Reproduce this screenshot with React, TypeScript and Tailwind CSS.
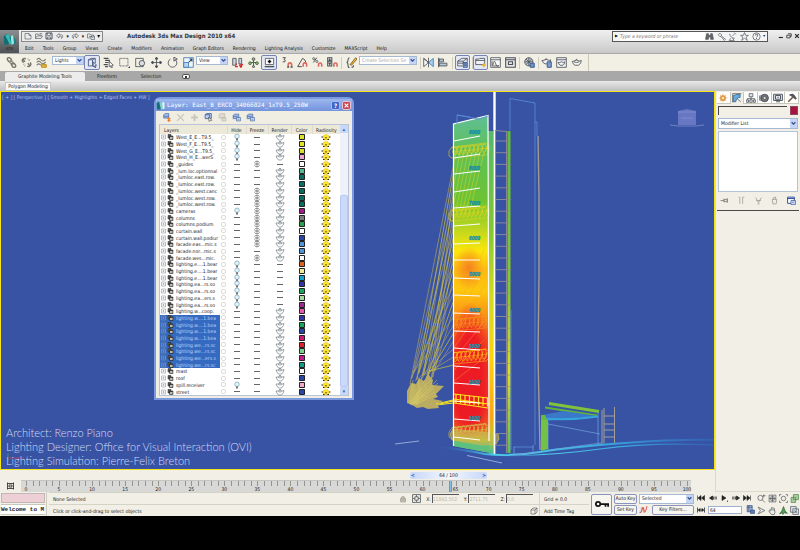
import React from "react";

type IconProps = { children: React.ReactNode; className?: string };

function Icon({ children, className = "size-3" }: IconProps) {
  return (
    <svg viewBox="0 0 16 16" className={`block shrink-0 ${className}`} fill="none" stroke="#4b5058" strokeWidth="1.2" aria-hidden="true">
      {children}
    </svg>
  );
}

const g = {
  newFile: <path d="M2 3h8l4 4v7H2zM10 3v4h4" />,
  open: <path d="M1 13V4h5l1 2h5v2M1 13l3-5h11l-3 5zM9 3h4l1 2" />,
  save: (
    <>
      <path d="M2 2h12v12H2z" strokeWidth="2" />
      <path d="M5 2v5h6V2M5 14v-4h6v4" />
    </>
  ),
  undo: <path d="M6 3 1 8l5 4V9c4-2 6 0 5 4 5-5 2-9-5-7z" />,
  redo: <path d="M10 3l5 5-5 4V9c-4-2-6 0-5 4-5-5-2-9 5-7z" />,
  project: <path d="M1 4h5l1 2h6v3M1 4v8h6M4 9h6M8 8h7v7H8zM10 11h3" />,
  link: (
    <>
      <ellipse cx="5" cy="4" rx="3.5" ry="2.4" transform="rotate(45 5 4)" stroke="#77746c" strokeWidth="2" />
      <ellipse cx="8" cy="8" rx="3.5" ry="2" transform="rotate(45 8 8)" stroke="#9a968b" strokeWidth="1.6" />
      <ellipse cx="11" cy="12" rx="3.5" ry="2.4" transform="rotate(45 11 12)" stroke="#77746c" strokeWidth="2" />
    </>
  ),
  unlink: (
    <>
      <path d="M7 3a3 3 0 1 0-3 5M3 4l3 3M9 13a3 3 0 1 0 4-5M10 9l3 4" stroke="#77746c" strokeWidth="2" />
      <path d="M10 2l1 3M13 3l-1 3M3 11l2-1M5 14l1-3" stroke="#a7a294" />
    </>
  ),
  bind: (
    <>
      <path d="M1 4q3-4 6 0t7-1M1 8q3-4 6 0t7-1M1 12q3-4 6 0" stroke="#77746c" strokeWidth="1.6" />
      <path d="M8 11h7v4H8z" fill="#e0b13a" stroke="#b98512" />
    </>
  ),
  select: <path d="M2 4l4-2h6v7M2 4h6v9H2zM8 4l4-2M9 7l5 5-2 .4 1 2.6-1.500.5-1-2.600-1.500 1.500z" stroke="#3d4f7a" />,
  byName: (
    <>
      <path d="M1 2h7M3 5h7M3 8h5M1 11h6M3 14h4" strokeWidth="1.700" />
      <path d="M9 6l6 6-2.500.3 1 3-1.500.5-1-3L9 14z" fill="#fff" />
    </>
  ),
  rect: (
    <>
      <path d="M1 2h12v11H1z" strokeDasharray="1.500 .7" />
      <path d="M13 16h3v-3z" fill="#333" stroke="none" />
    </>
  ),
  windowSel: (
    <>
      <path d="M1 2h11v12H1z" />
      <circle cx="10" cy="9" r="4" fill="#d8dde2" />
    </>
  ),
  move: <path d="M8 2v12M2 8h12M8 0L6 3h4zM8 16l-2-3h4zM0 8l3-2v4zM16 8l-3-2v4z" fill="#3e434a" />,
  rotate: <path d="M11 3A6.300 6.300 0 1 1 5 3M10 0l5 3-5 3z" />,
  scale: (
    <>
      <path d="M1 1h14v14H1z" fill="#eef4fb" stroke="#3d78b8" />
      <path d="M1 8h7v7H1z" fill="#b8d4ef" stroke="#3d78b8" />
      <path d="M8 8l5-5M9.500 3H13v3.500" stroke="#24496f" strokeWidth="1.500" />
    </>
  ),
  pivot: (
    <>
      <path d="M1 2h5v10H1zM10 2h4v8h-4z" fill="#c8d4e4" />
      <path d="M6 12v-3M4.500 14h4M13 15l2-4-4 1z" stroke="#cf2525" strokeWidth="1.800" />
    </>
  ),
  manip: (
    <>
      <path d="M8 3v10M3 8h10" stroke="#4b6a4b" strokeWidth="1.600" />
      <circle cx="8" cy="3" r="2" fill="#8fc46d" />
      <circle cx="3" cy="9" r="2" fill="#8fc46d" />
      <circle cx="13" cy="9" r="2" fill="#8fc46d" />
      <circle cx="8" cy="14" r="1.500" fill="#8fc46d" />
    </>
  ),
  keyboard: (
    <>
      <path d="M2 2h12v9H2z" fill="#fff" />
      <path d="M8 4v5M5.500 6.500h5" stroke="#111" strokeWidth="2.200" />
      <path d="M1 14h14" strokeWidth="2" />
    </>
  ),
  snap3: (
    <>
      <path d="M1 1h4l-2 2.500q3 .5 1 3.500H1" stroke="#333" />
      <path d="M9 14v-3a2.500 2.500 0 0 1 5 0v3" stroke="#db6a5e" strokeWidth="2.300" />
      <path d="M7.500 14.500h3M12.500 14.500h3" stroke="#555" strokeWidth="2" />
    </>
  ),
  snapAngle: (
    <>
      <path d="M1 14L8 2q4 1 5 6M1 14h6" stroke="#333" />
      <path d="M9 14v-3a2.500 2.500 0 0 1 5 0v3" stroke="#db6a5e" strokeWidth="2.300" />
    </>
  ),
  snapPercent: (
    <>
      <path d="M2 8l5-7" stroke="#333" />
      <circle cx="2.500" cy="2.500" r="1.500" />
      <circle cx="7" cy="6.500" r="1.500" />
      <path d="M9.500 14v-3a2.300 2.300 0 0 1 4.600 0v3" stroke="#db6a5e" strokeWidth="2.300" />
    </>
  ),
  snapSpin: (
    <>
      <path d="M1 1h6v12H1zM1 7h6M3 5l1-2 1 2zM3 9l1 2 1-2z" strokeWidth="1.500" />
      <path d="M10 14v-3a2.300 2.300 0 0 1 4.600 0v3" stroke="#db6a5e" strokeWidth="2.300" />
    </>
  ),
  namedSel: (
    <>
      <path d="M5 1Q3 1 3 4t-2 4q2 0 2 4t2 3M8 15q3 0 3-3" strokeWidth="1.500" />
      <path d="M6 11L14 1l2 2-8 9z" fill="#f0b436" stroke="#7d5a12" />
    </>
  ),
  mirror: (
    <>
      <path d="M1 2v12l6-5V7z M1 2l6 5" fill="#f7f7f7" />
      <path d="M15 2v12L9 9V7z" fill="#a9cff2" stroke="#3d78b8" />
      <path d="M8 1v14" />
    </>
  ),
  align: (
    <>
      <path d="M1 1v14" strokeWidth="1.600" />
      <path d="M2 3h6v4H2zM2 9h11v4H2z" fill="#bcc6d2" />
    </>
  ),
  layers: (
    <>
      <path d="M1 6l6-4h8l-6 4zM1 6v3h8M1 9v4h7M9 6v3M15 2v5" fill="#e9eef6" />
      <path d="M9 8h6v7H9zM10 10h4M10 12h4" fill="#90a8cf" stroke="#31508a" />
    </>
  ),
  ribbon: (
    <>
      <path d="M1 3h5l1-1h7v9H1zM1 5h13" fill="#eef1f6" />
      <path d="M13 9v6M10 12h6" stroke="#e9b93a" strokeWidth="2.400" />
    </>
  ),
  curve: (
    <>
      <path d="M1 1h14v14H1zM1 4h14M3 6v7h10" fill="#fafafa" />
      <path d="M4 12Q6 2 8 9t5 3" />
    </>
  ),
  schematic: <path d="M1 1h14v14H1zM1 4h14M5 7h6v4H5z" strokeWidth="1.500" fill="#e4e6e8" />,
  material: (
    <>
      <circle cx="7" cy="7" r="6" fill="#c3cbd6" />
      <path d="M1 7h12M7 1v12M3 3l8 8M11 3L3 11" />
      <path d="M9 9h6v6H9z" fill="#6f92c8" stroke="#31508a" />
    </>
  ),
  renderSetup: (
    <>
      <path d="M3 5q5-3 9 0l2-1q0 4-3 6H6Q3 9 2 6 0 5 3 5M6 3h3" fill="#eee" />
      <path d="M9 7h6v8H9z" fill="#7d9bcb" stroke="#31508a" />
    </>
  ),
  renderFrame: <path d="M1 1h14v14H1zM1 4h14M5 8q3-2 6 0l2-1q-1 4-3 5H6Q4 10 3 8z" fill="#f1f3f6" />,
  teapot: <path d="M4 6q4-3 8 0l3-1q0 4-4 7H6Q3 11 2.500 8 0 6 4 6M7 3.500h2M4 7q4 2 8 0" fill="#f5f5f0" />,
  binoculars: <path d="M3 3h3v3h4V3h3l2 10h-5V9H6v4H1z" fill="#666" />,
  wrench: <path d="M2 5l3-3 3 3v2l7 6-2 2-6-7H5z" />,
  dish: <path d="M3 3q1 8 9 8M5 11l-3 4h9l-3-4M8 7l4-4M11 1l3 3" />,
  star: <path d="M8 1l2 5h5l-4 3 2 6-5-4-5 4 2-6-4-3h5z" />,
  help: (
    <>
      <circle cx="8" cy="8" r="6.500" />
      <path d="M6 6q0-2 2-2t2 2-2 3M8 11v1.500" strokeWidth="1.700" />
    </>
  ),
  minimize: <path d="M2 12h11" strokeWidth="3" stroke="#222" />,
  restore: <path d="M5 2h9v7h-3M2 6h9v7H2z" strokeWidth="2" stroke="#222" />,
  close: <path d="M3 3l10 10M13 3L3 13" strokeWidth="3" stroke="#222" />,
  sun: (
    <>
      <path d="M8 1v14M1 8h14M3 3l10 10M13 3L3 13" stroke="#f3bf7c" strokeWidth="1.500" />
      <circle cx="8" cy="8" r="3.500" fill="#fbe3b8" stroke="#e08a2d" strokeWidth="2.200" />
    </>
  ),
  modify: (
    <>
      <path d="M2 14V4q6-2 11-2v5q-6 0-7 7z" fill="#6aa9dc" stroke="#28659b" />
      <path d="M1 1h14M1 1v14M8 9l6 5" stroke="#555" />
    </>
  ),
  hierarchy: <path d="M5 1h6v5H5zM8 6v3M2 9h12M2 9v2M8 9v2M14 9v2M1 11h3v4H1zM6 11h4v4H6zM12 11h3v4h-3z" fill="#e8e8e8" />,
  motion: (
    <>
      <circle cx="9" cy="8" r="6" fill="#777" strokeWidth="1.500" />
      <circle cx="9" cy="8" r="2.500" fill="#ddd" />
      <path d="M1 4v8M3 3v10" />
    </>
  ),
  display: <path d="M1 2h14v10H1zM4 4h8v6H4zM5 14h6M8 6v2" fill="#e6ecf4" strokeWidth="1.500" />,
  hammer: (
    <>
      <path d="M2 14L10 6" stroke="#7a5a3a" strokeWidth="2.500" />
      <path d="M4 3q5-3 8 1l3 5-2 1-4-4z" fill="#555" />
    </>
  ),
  pin: <path d="M1 8h6M7 5v6M7 6h6v4H7zM13 4v8" strokeWidth="1.700" stroke="#8b8b84" />,
  showEnd: <path d="M5 2v12M10 2v12M3 2h2M10 2h3" strokeWidth="1.700" stroke="#b0ada0" />,
  unique: <path d="M3 3l5 9 5-9M6 14h4M4 8h8" strokeWidth="1.500" stroke="#a19e92" />,
  trash: <path d="M4 6h8l-1 8H5zM6 6V3l4-1v4" strokeWidth="1.500" stroke="#a19e92" />,
  configure: (
    <>
      <path d="M1 2h12v11H1zM1 4.500h12" fill="#fff" stroke="#2b4c9b" strokeWidth="1.700" />
      <path d="M7 8h8v7H7zM9 11h4" fill="#dce6f8" stroke="#2b4c9b" />
    </>
  ),
  lock: <path d="M3 7h10v7H3zM5 7V4q3-3 6 0v3M3 10h10" fill="#c9c6ba" stroke="#999688" />,
  axis: <path d="M1 1h14v14H1zM8 2v3M8 11v3M2 8h3M11 8h3M5 5h6v6H5z" strokeWidth="1.400" />,
  cube: <path d="M2 6l4-4h8v8l-4 4H2zM2 6h8v8M10 6l4-4" />,
  key: (
    <>
      <circle cx="3.500" cy="8" r="2.500" strokeWidth="2" stroke="#111" />
      <path d="M6 8h9v3M12 8v3" strokeWidth="2" stroke="#111" />
    </>
  ),
  wave: (
    <>
      <path d="M1 13h3V5h4v8h3" stroke="#999" />
      <path d="M1 14Q5 14 6 7t3 2 5-7" stroke="#d93a3a" strokeWidth="1.500" />
    </>
  ),
  toStart: <path d="M1 3v10M8 3L2 8l6 5zM15 3L9 8l6 5z" fill="#222" stroke="#222" />,
  prev: <path d="M7 4L1 8l6 4zM9 5v6M12 5v6M14.500 5v6" fill="#222" stroke="#222" strokeWidth="1.500" />,
  play: <path d="M4 3v10l8-5zM14 14h2v2" fill="#222" stroke="#222" />,
  next: <path d="M9 4l6 4-6 4zM1.500 5v6M4 5v6M7 5v6" fill="#222" stroke="#222" strokeWidth="1.500" />,
  toEnd: <path d="M15 3v10M8 3l6 5-6 5zM1 3l6 5-6 5z" fill="#222" stroke="#222" />,
  keyMode: <path d="M1 3v10M15 3v10M2 8h12M6 5L3 8l3 3zM10 5l3 3-3 3z" fill="#222" stroke="#222" strokeWidth="1.500" />,
  timeCfg: (
    <>
      <path d="M2 1h9v11H2zM2 4h9M5 1v11" fill="#9db3d6" stroke="#38507e" />
      <path d="M8 9h7v6H8z" fill="#5d7db5" stroke="#38507e" />
    </>
  ),
  zoom: (
    <>
      <circle cx="6" cy="7" r="4.500" />
      <path d="M9 10l5 5M12 1v5M10 3h5" />
    </>
  ),
  zoomAll: <path d="M2 2h12v12H2zM8 2v12M2 8h12M5 5h6v6H5z" />,
  extents: (
    <>
      <path d="M1 4V1h3M12 1h3v3M15 12v3h-3M4 15H1v-3" />
      <circle cx="8" cy="8" r="4" />
    </>
  ),
  extentsAll: <path d="M6 1h9v9H6zM2 6h8v9H2z" fill="#a9cfa0" stroke="#4f7d48" />,
  fov: <path d="M2 2l12 6-12 6 4-6z" fill="#eee" />,
  hand: <path d="M4 9V5M6.500 8V2M9 8V2M11.500 9V4M4 9q-3-2-2 1l4 5h5q2-3 1-7" />,
  walk: <path d="M8 1l3 8 4 4-6-1-2 3-1-3-5 2 4-5z" fill="#4ba24f" stroke="#2f5c33" />,
  maxView: <path d="M1 1h10v10H1zM5 5h10v10H5zM8 8l4 4" fill="#dfe6f0" />,
  layerNew: (
    <>
      <path d="M3 3l3-2h6v8H3zM3 6h9" fill="#a6bfe8" stroke="#41649f" />
      <path d="M9 9l6 5M15 9l-5 5M12 8v8" stroke="#ef7c22" strokeWidth="1.800" />
    </>
  ),
  delX: <path d="M2 2l12 12M14 2L2 14" stroke="#c9c6bb" strokeWidth="2.500" />,
  plus: <path d="M8 2v12M2 8h12" stroke="#c9c6bb" strokeWidth="3.500" />,
  layerSel: (
    <>
      <path d="M2 3l3-2h8v9H2zM2 3h8v7" fill="#bcd0f0" stroke="#41649f" strokeWidth="1.500" />
      <path d="M8 7l6 6-3 .5L9 15z" fill="#fff" />
    </>
  ),
  layerDim: <path d="M2 3l3-2h7v8H2zM7 8h7v6H7z" fill="#dedbd0" stroke="#bbb8aa" />,
  layerHide: (
    <>
      <path d="M2 4l3-2h7v8H2zM2 6h8" fill="#a6bfe8" stroke="#41649f" />
      <path d="M8 8h7v6H8zM10 11h3" fill="#d6e1f4" stroke="#41649f" />
    </>
  ),
  bars: <path d="M2 1v14M14 1v14M2 3h12M2 13h12M5 6h6v4H5z" strokeWidth="1.600" stroke="#222" />,
};

type ToolProps = { icon: React.ReactNode; label: string; active?: boolean; className?: string };
function Tool({ icon, label, active, className = "h-[15px] w-[15px]" }: ToolProps) {
  return (
    <button
      aria-label={label}
      className={`flex shrink-0 items-center justify-center ${className} ${active ? "rounded-xs border border-[#7583b5] bg-[#e3e8f4]" : ""}`}
    >
      <Icon className="size-[11px]">{icon}</Icon>
    </button>
  );
}

type DropProps = { label: string; value: string; className: string; muted?: boolean };
function Drop({ label, value, className, muted }: DropProps) {
  return (
    <div className={`relative shrink-0 ${className}`}>
      <select
        aria-label={label}
        className={`block h-full w-full appearance-none border border-[#a5b8d4] bg-white pl-[2px] text-[5px] leading-[7px] ${muted ? "text-[#a8a8a8]" : "text-[#222]"}`}
      >
        <option>{value}</option>
      </select>
      <span className="pointer-events-none absolute inset-y-px right-px flex w-[7px] items-center justify-center bg-[#c6d5f5]">
        <svg viewBox="0 0 8 8" className="size-[5px]" fill="none" stroke="#31528f" strokeWidth="2" aria-hidden="true">
          <path d="M1 2l3 3 3-3" />
        </svg>
      </span>
    </div>
  );
}

function Sep() {
  return <span className="h-3 w-px shrink-0 bg-[#d0cdc0]" />;
}

const menus = ["Edit", "Tools", "Group", "Views", "Create", "Modifiers", "Animation", "Graph Editors", "Rendering", "Lighting Analysis", "Customize", "MAXScript", "Help"];

function Header() {
  return (
    <header className="flex bg-linear-to-b from-[#f0f0f0] to-[#c9c9c9]">
      <button aria-label="Application menu" className="flex h-[23px] w-[19px] shrink-0 flex-col items-center justify-center bg-linear-to-b from-[#8b8f91] to-[#4e5254]">
        <svg viewBox="0 0 20 18" className="h-[15px] w-4" aria-hidden="true">
          <path d="M2 5l4-3 4 5-2 8-5 1z" fill="#0e6e73" />
          <path d="M4 4l4-2 5 9-3 5z" fill="#39b9b4" />
          <path d="M9 6l5-3 4 10-5 3z" fill="#128088" />
          <path d="M11 5l3-2 1 11-3 2z" fill="#a9e5dd" />
        </svg>
        <span className="text-[4px] leading-[4px] text-[#222]">ADS</span>
      </button>
      <div className="flex min-w-0 flex-1 flex-col">
        <div className="flex h-3 items-center pl-[2px]">
          <div className="flex h-[11px] w-[82px] shrink-0 items-center justify-between border border-[#888] bg-[#ececec] px-[2px]">
            {[g.newFile, g.open, g.save, g.undo].map((ic, i) => (
              <button key={i} aria-label={["New", "Open", "Save", "Undo"][i]}>
                <Icon className="size-2">{ic}</Icon>
              </button>
            ))}
            <span className="text-[5px] leading-[6px]">▾</span>
            <button aria-label="Redo"><Icon className="size-2">{g.redo}</Icon></button>
            <span className="text-[5px] leading-[6px]">▾</span>
            <button aria-label="Project folder"><Icon className="size-2">{g.project}</Icon></button>
            <span className="text-[6px] leading-[6px]">▾</span>
          </div>
          <h1 className="ml-6 flex-1 text-[6px] leading-[8px] font-bold whitespace-nowrap text-[#333]">Autodesk 3ds Max Design 2010 x64</h1>
          <div className="flex h-[11px] w-[156px] shrink-0 items-center border border-[#555] bg-[#f5f5f5] pr-[2px]">
            <span className="w-[7px] text-center text-[4px] leading-[6px]">▶</span>
            <input aria-label="Search" placeholder="Type a keyword or phrase" className="h-[9px] w-[85px] bg-white text-[5px] leading-[7px] italic placeholder:text-[#777]" />
            <div className="flex flex-1 items-center justify-between">
              {[g.binoculars, g.wrench, g.dish, g.star, g.help].map((ic, i) => (
                <button key={i} aria-label={["Find", "Subscription", "Communication", "Favorites", "Help"][i]}>
                  <Icon className="size-[9px]">{ic}</Icon>
                </button>
              ))}
              <span className="text-[4px] leading-[6px]">▾</span>
            </div>
          </div>
          <div className="flex w-8 shrink-0 items-center justify-end gap-[2px]">
            {[g.minimize, g.restore, g.close].map((ic, i) => (
              <button key={i} aria-label={["Minimize", "Restore", "Close"][i]}>
                <Icon className="size-[6px]">{ic}</Icon>
              </button>
            ))}
          </div>
        </div>
        <nav className="flex h-[11px] items-center gap-[9px] pl-[6px] text-[5px] leading-[8px] text-[#111]">
          {menus.map((m) => (
            <button key={m} className="whitespace-nowrap">{m}</button>
          ))}
        </nav>
      </div>
    </header>
  );
}

function Toolbar() {
  const mid = "h-[15px] w-4";
  return (
    <div className="flex h-[18px] items-center overflow-hidden border-t border-[#aaa] bg-[#f2f0e4] pl-1">
      <Tool icon={g.link} label="Link" />
      <Tool icon={g.unlink} label="Unlink" />
      <Tool icon={g.bind} label="Bind" />
      <Drop label="Selection filter" value="Lights" className="mt-[2px] ml-[3px] h-[9px] w-8 self-start" />
      <Tool icon={g.select} label="Select" active className={mid} />
      <Tool icon={g.byName} label="Select by name" className={mid} />
      <Tool icon={g.rect} label="Rectangular region" className={mid} />
      <Tool icon={g.windowSel} label="Window crossing" className={mid} />
      <Tool icon={g.move} label="Move" className={mid} />
      <Tool icon={g.rotate} label="Rotate" className={mid} />
      <Tool icon={g.scale} label="Scale" className={mid} />
      <Drop label="Coordinate system" value="View" className="mt-[2px] mr-px h-[9px] w-8 self-start" />
      <Tool icon={g.pivot} label="Pivot center" className={mid} />
      <Tool icon={g.manip} label="Manipulate" className={mid} />
      <Tool icon={g.keyboard} label="Keyboard override" active className={mid} />
      <div className="flex items-center pl-[3px]">
        <Tool icon={g.snap3} label="Snaps" />
        <Tool icon={g.snapAngle} label="Angle snap" />
        <Tool icon={g.snapPercent} label="Percent snap" />
        <Tool icon={g.snapSpin} label="Spinner snap" />
      </div>
      <div className="flex items-center gap-[2px] pl-px">
        <Sep />
        <Tool icon={g.namedSel} label="Named selections" />
      </div>
      <Drop label="Selection set" value="Create Selection Se" muted className="mt-[2px] h-[9px] w-[58px] self-start" />
      <div className="flex items-center pl-[3px]">
        <Sep />
        <Tool icon={g.mirror} label="Mirror" />
        <Tool icon={g.align} label="Align" />
      </div>
      <div className="flex items-center gap-[2px] pl-px">
        <Sep />
        <Tool icon={g.layers} label="Layers" active />
        <Sep />
      </div>
      <Tool icon={g.ribbon} label="Ribbon" active />
      <Tool icon={g.curve} label="Curve editor" />
      <Tool icon={g.schematic} label="Schematic view" />
      <div className="flex items-center gap-px pl-px">
        <Sep />
        <Tool icon={g.material} label="Materials" className={mid} />
        <Sep />
      </div>
      <Tool icon={g.renderSetup} label="Render setup" />
      <Tool icon={g.renderFrame} label="Rendered frame" />
      <Tool icon={g.teapot} label="Render" />
      <span className="ml-1 h-full w-px bg-[#c9c6ba]" />
    </div>
  );
}

function Ribbon() {
  return (
    <>
      <div className="flex h-[10px] items-end bg-[#a8a8a8] pl-[5px] text-[5px] leading-[9px] text-[#222]">
        <button className="h-[9px] w-20 rounded-t-xs bg-[#ececec] text-center whitespace-nowrap">Graphite Modeling Tools</button>
        <button className="w-11 text-center">Freeform</button>
        <button className="w-11 text-center">Selection</button>
        <button aria-label="Ribbon options" className="mb-[2px] ml-[9px] flex h-[5px] w-2 items-center justify-center rounded-xs border border-[#555] bg-white">
          <span className="size-[2px] bg-[#333]" />
        </button>
      </div>
      <div className="flex h-[10px] items-end bg-linear-to-b from-[#e9e9e9] to-[#bfbfbf] pl-[5px]">
        <button className="h-[9px] w-[46px] border border-[#c8c8c8] bg-[#f8f8f8] text-[5px] leading-[7px] whitespace-nowrap text-[#222]">Polygon Modeling</button>
      </div>
    </>
  );
}

/* Floor lines on the facade: left y, right y */
const floors = [
  [141, 136], [158, 154], [174, 171], [192, 188], [208, 206], [226, 224], [244, 243], [260, 260], [278, 279],
  [295, 296], [313, 314], [331, 332], [348, 350], [366, 368], [383, 385], [401, 403], [419, 421], [437, 440],
];
const levels = [134, 170, 205, 240, 276, 312, 348, 384, 420];
const rungs = Array.from({ length: 27 }, (_, i) => 141 + i * 11.7);
const rays = Array.from({ length: 26 }, (_, i) => i);

function Lattice({ y, color, h = 10 }: { y: number; color: string; h?: number }) {
  return (
    <g stroke={color} fill="none" strokeWidth="0.6">
      <path d={`M449 ${y}l3-4 34-4 3 3v6l-3 3-34 3-3-2z`} />
      <path d={`M452 ${y - h / 2 + 2}l34-4M452 ${y + 1}l36-4`} />
      {Array.from({ length: 8 }, (_, i) => (
        <g key={i}>
          <ellipse cx={455 + i * 4.2} cy={y - i * 0.4} rx="2" ry={h / 2 - 1} />
          <path d={`M${454 + i * 4.2} ${y + 4}l4-9`} />
        </g>
      ))}
    </g>
  );
}

function Scene() {
  return (
    <svg viewBox="1 92 713 377" className="absolute inset-0 h-full w-full" role="img" aria-label="Tower lighting simulation">
      <defs>
        <linearGradient id="face" x1="0" y1="0" x2="0" y2="1">
          <stop offset="0" stopColor="#5fbf96" />
          <stop offset="0.100" stopColor="#5fc05a" />
          <stop offset="0.250" stopColor="#6cc334" />
          <stop offset="0.330" stopColor="#b6d520" />
          <stop offset="0.400" stopColor="#fbe60a" />
          <stop offset="0.460" stopColor="#fdb912" />
          <stop offset="0.520" stopColor="#fdc80e" />
          <stop offset="0.600" stopColor="#f98c16" />
          <stop offset="0.670" stopColor="#f25a1e" />
          <stop offset="0.760" stopColor="#ee3c22" />
          <stop offset="0.930" stopColor="#f05a20" />
          <stop offset="0.960" stopColor="#c5c92c" />
          <stop offset="1" stopColor="#3fb6a0" />
        </linearGradient>
        <linearGradient id="side" x1="0" y1="0" x2="0" y2="1">
          <stop offset="0" stopColor="#55b96a" />
          <stop offset="0.300" stopColor="#7fc832" />
          <stop offset="0.500" stopColor="#cfdc1c" />
          <stop offset="0.700" stopColor="#fdd40c" />
          <stop offset="0.880" stopColor="#fba615" />
          <stop offset="0.950" stopColor="#b8cf25" />
          <stop offset="1" stopColor="#3fb6a0" />
        </linearGradient>
        <radialGradient id="hot"><stop offset="0.500" stopColor="#ed1c24" /><stop offset="1" stopColor="#ed1c24" stopOpacity="0" /></radialGradient>
        <radialGradient id="warm"><stop offset="0" stopColor="#f58220" /><stop offset="1" stopColor="#f58220" stopOpacity="0" /></radialGradient>
        <linearGradient id="ground" x1="0" x2="1">
          <stop offset="0" stopColor="#2f7fd0" stopOpacity="0" />
          <stop offset="0.200" stopColor="#4fd0e8" />
          <stop offset="0.600" stopColor="#3aa8e0" />
          <stop offset="1" stopColor="#2f7fd0" stopOpacity="0.300" />
        </linearGradient>
        <linearGradient id="strip" x1="0" y1="0" x2="0" y2="1">
          <stop offset="0" stopColor="#5cbf3a" />
          <stop offset="0.500" stopColor="#86c932" />
          <stop offset="0.750" stopColor="#e2e01a" />
          <stop offset="1" stopColor="#5fc05a" />
        </linearGradient>
        <clipPath id="faceClip"><path d="M453.500 124L488 115.500 490 453 453.500 446z" /></clipPath>
      </defs>

      <g stroke="#b3a55e" strokeWidth="0.600">
        {rays.map((i) => (
          <path key={i} d={`M${410 + ((i * 7) % 26)} ${384 - ((i * 5) % 14)}L453.500 ${165 + i * 8}`} stroke={i % 4 === 1 ? "#e8d928" : i % 3 ? "#ada279" : "#c0af4b"} />
        ))}
      </g>

      <path d="M453.500 124L488 115.500 490 453 453.500 446z" fill="url(#face)" />
      <g clipPath="url(#faceClip)">
        <ellipse cx="469" cy="268" rx="15" ry="22" fill="url(#warm)" />
        <ellipse cx="470" cy="368" rx="23" ry="66" fill="url(#hot)" />
        <ellipse cx="469" cy="402" rx="24" ry="36" fill="url(#hot)" />
        <g strokeWidth="0.500" stroke="#d9d42a">
          {rays.slice(0, 8).map((i) => (
            <path key={i} d={`M${447 + i * 3} ${204 + i * 2}L${456 + i * 4} 152`} />
          ))}
          {rays.slice(0, 7).map((i) => (
            <path key={i} d={`M445 ${334 + i * 9}L484 ${250 + i * 18}`} stroke="#f7a63a" strokeOpacity="0.800" />
          ))}
        </g>
        <path d="M454 440q16 3 36 3v10l-36-6z" fill="#5dc17d" />
      </g>
      <path d="M488 131h6v324l-5-2z" fill="url(#side)" />

      <Lattice y={151} color="#dcd31c" />
      <Lattice y={214} color="#dcd31c" />
      <g clipPath="url(#faceClip)">
        <Lattice y={324} color="#f7941d" h={12} />
        <Lattice y={357} color="#fdb913" h={12} />
      </g>
      <g stroke="#ffe81a" fill="none" strokeWidth="1.200">
        <path d="M440 404l13-3 37 3M454 394l34 4M454 399l34 5M454 403l34 5" />
        {Array.from({ length: 8 }, (_, i) => (
          <path key={i} d={`M${456 + i * 4.500} ${394 + i * 0.500}v9`} />
        ))}
      </g>
      <Lattice y={432} color="#d3bd4a" h={13} />
      <path d="M450 434l3-5 45 5 1 5-3 5-14 1-30-5z" fill="#c8b455" fillOpacity="0.600" stroke="#cdbb4c" strokeWidth="0.700" />

      <g stroke="#fff" strokeWidth="1">
        {floors.map(([a, b]) => (
          <path key={a} d={`M454 ${a}L480 ${b}`} />
        ))}
      </g>
      <g fill="#118fa8" stroke="#118fa8" strokeWidth="0.300" fontSize="5" fontWeight="700" fontStyle="italic" fontFamily="Liberation Sans, sans-serif">
        {levels.map((y, i) => (
          <text key={y} x="469" y={y}>{`${9 - i}000`}</text>
        ))}
      </g>
      <g fill="none" stroke="#fff">
        <path d="M453.500 446V124L488 115.500 489 441" strokeWidth="1.200" />
        <path d="M494.500 92V130" strokeWidth="2.400" />
        <path d="M494.500 130V455" strokeWidth="1.700" />
        <path d="M395 444l24-3M467 455.500l35 7.500" stroke="#a9bfe8" strokeWidth="0.800" />
      </g>

      <g fill="none" stroke="#8a8795" strokeWidth="1">
        {rungs.map((y) => (
          <path key={y} d={`M495 ${y}h12`} />
        ))}
        <path d="M495 130.500l12 1M506.500 131V453" />
      </g>
      <path d="M507.500 131h3v322h-3z" fill="url(#strip)" />
      {rungs.map((y) => (
        <path key={y} d={`M507 ${y}h4`} stroke="#8a8795" strokeWidth="0.600" />
      ))}
      <g fill="none" stroke="#5b8ed8" strokeWidth="0.800">
        <path d="M457 124V115l13 2M510 130V98.500l25 4.500V445M513 447h20M535 122h2v14M511 310v140" />
        <path d="M457 115l22 4 9-3" />
      </g>
      <path d="M538 136l1 60 0 80-1 80 2 94" fill="none" stroke="#9e9c92" strokeWidth="1.400" />

      <path d="M440 447q25 3 45 7 25 3 55-2t85-9 90-3" fill="none" stroke="url(#ground)" strokeWidth="2" />
      <path d="M500 456q50 0 100-7t115-4" fill="none" stroke="url(#ground)" strokeWidth="1.200" />
      <path d="M549 403.500l50 8" stroke="#7fc23c" strokeWidth="3" />
      <path d="M545 407.500l52 8" stroke="#5fb53f" strokeWidth="2" />
      <path d="M542 415l22-4 33 5-50 5z" fill="#3b78c8" />
      <path d="M541 418.500q30 2 57-2" stroke="#35a4dd" strokeWidth="2" fill="none" />
      <path d="M541 420h7v29l-7 2z" fill="#74c148" />
      <path d="M541 415l4 0 2 5h-6z" fill="#69b93f" />
      <path d="M548 422v28M548 424l52 10M550 450l51-7M598 412v32M514 447v8l19-2v-8M513 455l27-3" stroke="#6ea6dd" strokeWidth="0.700" fill="none" />
      <path d="M602 410v34M604 408v35M614.500 407v36M604 416h10M604 424h10M604 430h10M604 437h10" stroke="#a29f97" strokeWidth="1" fill="none" />

      <path d="M678 111l9-2 9 2v14h-18z" fill="#6877c4" />
      <path d="M678 112h18M670 125l8 1h18l8-1M681 118h12" stroke="#8a95d0" strokeWidth="0.700" fill="none" />
      <path d="M8 453v8" stroke="#3f8f68" />
      <path d="M8 458h16" stroke="#b0406a" />

      {/* fixture cluster at the foot of the light fan */}
      <path d="M407 403l0-12 4-8 5 1 3-6 5 3 4-7 5 6-1 5 12 1-8 8 2 3-5 2 10 2-6 3 2 4-11 1-5-2-6 1-5-3z" fill="#b9ac62" />
      <g stroke="#d5c969" strokeWidth="0.500">
        {rays.map((i) => (
          <path key={i} d={`M${409 + (i % 9)} ${403 + (i % 3)}L${413 + i} ${380 + (i % 6) * 3}`} />
        ))}
      </g>
      <path d="M436 404l17-4M437 405l16-2" stroke="#f2e129" />
    </svg>
  );
}

type Row = { name: string; h: boolean; f: boolean; r: boolean; c: string; sel?: boolean };
const row = (name: string, flags: string, c: string, sel = false): Row => ({ name, h: flags.includes("h"), f: flags.includes("f"), r: flags.includes("r"), c, sel });
const rows: Row[] = [
  row("West_E_E...T9.5_", "hr", "#d8e02c"),
  row("West_F_E...T9.5_", "hr", "#e4e32c"),
  row("West_G_E...T9.5_", "hr", "#d8e02c"),
  row("West_H_E...werS", "hr", "#efa3cf"),
  row("_guides", "f", "#ffffff"),
  row("_lum.loc.optionnal", "r", "#58b795"),
  row("_lumloc.east.row.", "r", "#0c6c62"),
  row("_lumloc.east.row.", "r", "#0c6c62"),
  row("_lumloc.west.canc", "fr", "#0c6c62"),
  row("_lumloc.west.row.", "fr", "#0c6c62"),
  row("_lumloc.west.row.", "fr", "#0c6c62"),
  row("cameras", "hfr", "#a31b86"),
  row("columns", "fr", "#7b7b7b"),
  row("columns.podium", "fr", "#2d9f48"),
  row("curtain.wall", "fr", "#ffffff"),
  row("curtain.wall.podiur", "fr", "#2846a3"),
  row("facade.eas...mic.s", "fr", "#4f95d9"),
  row("facade.nor...mic.s", "r", "#4f95d9"),
  row("facade.wes...mic.", "fr", "#ffffff"),
  row("lighting.e....1.bear", "h", "#e0601f"),
  row("lighting.e....1.bear", "h", "#f2ea9a"),
  row("lighting.e....1.bear", "h", "#19a4cf"),
  row("lighting.ea...rs.so", "h", "#3036a5"),
  row("lighting.ea...rs.so", "h", "#1aa55a"),
  row("lighting.ea...ers.s", "h", "#a3d99a"),
  row("lighting.ea...rs.so", "h", "#9a2a8d"),
  row("lighting.w...coop.", "r", "#e05cab"),
  row("lighting.w....1.bea", "r", "#3036a5", true),
  row("lighting.w....1.bea", "r", "#1aa55a", true),
  row("lighting.w....1.bea", "r", "#2846a3", true),
  row("lighting.w....1.bea", "r", "#cc1a6f", true),
  row("lighting.we...rs.sc", "r", "#e0202c", true),
  row("lighting.we...rs.sc", "r", "#7ccf8f", true),
  row("lighting.we...ers.s", "r", "#c21a8c", true),
  row("lighting.we...rs.sc", "r", "#119a86", true),
  row("mast", "r", "#ffffff"),
  row("roof", "r", "#2846a3"),
  row("spill.receiver", "hr", "#f3a8c8"),
  row("street", "r", "#2846a3"),
];

const Dash = () => <span className="mx-auto block h-px w-[6px] bg-[#666]" />;
const Bulb = () => (
  <svg viewBox="0 0 12 12" className="mx-auto block size-[6px] overflow-visible" aria-hidden="true">
    <circle cx="6" cy="4.500" r="4.500" fill="#e3f4fa" stroke="#6f98aa" strokeWidth="1.300" />
    <path d="M4.500 9h3v4h-3z" fill="#444" />
  </svg>
);
const Flake = () => (
  <svg viewBox="0 0 12 12" className="mx-auto block size-[6px] overflow-visible" fill="none" stroke="#777" strokeWidth="1.300" aria-hidden="true">
    <path d="M6-1v14M0 3l12 6M12 3L0 9M2 1h8M2 11h8" />
  </svg>
);
const Pot = () => (
  <svg viewBox="0 0 16 12" className="mx-auto block h-[6px] w-2 overflow-visible" fill="#fff" stroke="#69757a" strokeWidth="1.300" aria-hidden="true">
    <path d="M3 4q5-3 10 0l3-1q0 4-5 9H5Q1 8 0 4zM6 1h4M4 5q4 2 8 0" />
  </svg>
);
const Rad = () => (
  <svg viewBox="0 0 16 12" className="mx-auto block h-[6px] w-2 overflow-visible" aria-hidden="true">
    <path d="M2 7a6 6 0 0 1 12 0l-2 5H4z" fill="#ffe62e" stroke="#dcb81c" />
    <path d="M-1 5h3v2h-3zM14 5h3v2h-3zM2 10h3v2H2zM11 10h3v2h-3zM7 6h2v3H7z" fill="#29261c" />
  </svg>
);

function LayerDialog() {
  return (
    <section aria-label="Layer manager" className="absolute top-[5px] left-[153px] w-[200px] rounded-t-md border-2 border-[#7b9add] bg-[#f0eee2]">
      <div className="flex h-3 items-center gap-[2px] bg-linear-to-b from-[#9cb7ef] to-[#7393dc] pr-px">
        <svg viewBox="0 0 16 16" className="size-[9px]" aria-hidden="true">
          <path d="M1 4l4-3 4 6-1 8H2z" fill="#156f74" />
          <path d="M6 4l3-2 5 12-5 1z" fill="#7cd3ca" />
          <path d="M11 2h4v12h-3z" fill="#e8f4f2" />
        </svg>
        <h2 className="flex-1 overflow-hidden font-['DejaVu_Sans_Mono','Liberation_Mono',monospace] text-[6px] leading-[8px] whitespace-nowrap text-white">Layer: East_B_ERCO_34066024_1xT9.5_250W</h2>
        <button aria-label="Help" className="size-[9px] rounded-xs border border-[#a8bdf0] bg-[#3f63c6] text-[6px] leading-[7px] font-bold text-white">?</button>
        <button aria-label="Close" className="flex size-[9px] items-center justify-center rounded-xs border border-[#e9c4cf] bg-[#c84658]">
          <svg viewBox="0 0 8 8" className="size-[5px]" stroke="#fff" strokeWidth="1.800" aria-hidden="true"><path d="M1 1l6 6M7 1L1 7" /></svg>
        </button>
      </div>
      <div className="flex h-[13px] items-center gap-[5px] pl-[6px]">
        {[g.layerNew, g.delX, g.plus, g.layerSel, g.layerDim, g.layerHide, g.layerHide].map((ic, i) => (
          <button key={i} aria-label={["Create layer", "Delete", "Add", "Select objects", "Highlight", "Hide all", "Freeze all"][i]}>
            <Icon className="size-[9px]">{ic}</Icon>
          </button>
        ))}
      </div>
      <div className="mr-[3px] mb-[2px] ml-[3px] flex border border-[#b9c4d8] bg-white">
        <table className="h-[270px] w-[180px] table-fixed border-collapse text-[5px] leading-[6px] text-[#1c1c26]">
          <thead>
            <tr className="h-[9px] bg-[#ece9d8]">
              <th className="w-[60px] pl-1 text-left font-normal">Layers</th>
              <th className="w-[7px] border-r border-[#dedbcf]" />
              <th className="w-[19px] border-r border-[#dedbcf] font-normal">Hide</th>
              <th className="w-[22px] border-r border-[#dedbcf] font-normal">Freeze</th>
              <th className="w-[23px] border-r border-[#dedbcf] font-normal">Render</th>
              <th className="w-[21px] border-r border-[#dedbcf] font-normal">Color</th>
              <th className="w-7 font-normal">Radiosity</th>
            </tr>
          </thead>
          <tbody>
            {rows.map((r, i) => (
              <tr key={i}>
                <td className={`p-0 ${r.sel ? "bg-[#356ac0] text-[#b9d6fa]" : ""}`}>
                  <div className="flex items-center whitespace-nowrap">
                    <svg viewBox="0 0 28 12" className="mr-[2px] h-[6px] w-[14px] shrink-0" fill="none" aria-hidden="true">
                      <path d="M3 2h8v8H3zM5 6h4M7 4v4" stroke="#8d97a3" strokeWidth="1.200" />
                      <path d="M16 1h6v7h-6zM19 4h7v7h-7z" fill="#5b5b55" stroke="#222" />
                      <path d="M20 6h5v4h-5z" fill="#b9b9ae" />
                    </svg>
                    {r.name}
                  </div>
                </td>
                <td className="p-0"><span className="mx-auto block size-[5px] rounded-xs border border-[#dedbd2]" /></td>
                <td className="p-0">{r.h ? <Bulb /> : <Dash />}</td>
                <td className="p-0">{r.f ? <Flake /> : <Dash />}</td>
                <td className="p-0">{r.r ? <Pot /> : <Dash />}</td>
                <td className="p-0"><svg viewBox="0 0 6 6" className="mx-auto block size-[6px]" aria-hidden="true"><path d="M.5.5h5v5h-5z" fill={r.c} stroke="#222" /></svg></td>
                <td className="p-0"><Rad /></td>
              </tr>
            ))}
          </tbody>
        </table>
        <div className="flex w-2 flex-col justify-between bg-[#eef1fa]">
          <button aria-label="Scroll up" className="h-2 bg-[#c9d7f8] text-[5px] leading-[8px] text-[#31528f]">▴</button>
          <div className="mt-[62px] flex-1 rounded-xs border border-[#b4c6f2] bg-[#cbd9fa]" />
          <button aria-label="Scroll down" className="h-2 bg-[#c9d7f8] text-[5px] leading-[8px] text-[#31528f]">▾</button>
        </div>
      </div>
    </section>
  );
}

function Viewport() {
  return (
    <main className="relative min-h-[378px] flex-1 overflow-hidden border border-[#f5e316] bg-[#3853a4]">
      <Scene />
      <p className="relative pt-px pl-px text-[5px] leading-[8px] text-[#b8c1e6]">[ + ] [ Perspective ] [ Smooth + Highlights + Edged Faces + HW ]</p>
      <div className="absolute bottom-px left-[5px] font-['Lato','Noto_Sans',sans-serif] text-[11px] leading-[14px] font-light whitespace-nowrap text-[#d3daf3]">
        <p>Architect: Renzo Piano</p>
        <p>Lighting Designer: Office for Visual Interaction (OVI)</p>
        <p>Lighting Simulation: Pierre-Felix Breton</p>
      </div>
      <LayerDialog />
    </main>
  );
}

function CommandPanel() {
  const tabs: [React.ReactNode, string][] = [[g.sun, "Create"], [g.modify, "Modify"], [g.hierarchy, "Hierarchy"], [g.motion, "Motion"], [g.display, "Display"], [g.hammer, "Utilities"]];
  return (
    <aside className="flex w-[85px] shrink-0 flex-col border-b border-l border-[#dbd8cc] bg-[#f2f0e6] px-px pt-px">
      <div className="flex">
        {tabs.map(([ic, label], i) => (
          <button key={label} aria-label={label} className={`flex h-3 flex-1 items-center justify-center border-r border-[#c9c6ba] ${i === 1 ? "bg-[#f2f0e6]" : "border-b bg-white"}`}>
            <Icon className="size-[10px]">{ic}</Icon>
          </button>
        ))}
      </div>
      <div className="mt-[2px] flex items-center gap-[3px] px-px">
        <input aria-label="Object name" className="h-[9px] w-[69px] border-t border-l border-[#444] bg-[#f2f0e6]" />
        <button aria-label="Object color" className="h-[9px] flex-1 border border-[#8d4960] bg-[#a8123e]" />
      </div>
      <Drop label="Modifier list" value="Modifier List" className="mx-px mt-[3px] h-[11px]" />
      <div className="mx-px mt-[2px] h-[61px] border border-[#b3c3da] bg-white" />
      <div className="mx-[3px] mt-1 flex h-[9px] items-center justify-between">
        {[g.pin, g.showEnd, g.unique, g.trash, g.configure].map((ic, i) => (
          <button key={i} aria-label={["Pin stack", "Show end result", "Make unique", "Remove modifier", "Configure"][i]}>
            <Icon className="size-[9px]">{ic}</Icon>
          </button>
        ))}
      </div>
      <div className="mt-[5px] h-px bg-[#4c4a44]" />
    </aside>
  );
}

function Timeline() {
  return (
    <div className="bg-[#f2f0e6]">
      <div className="flex h-[10px] pl-[410px]">
        <div className="mt-[2px] flex h-[7px] w-[77px] items-center justify-between rounded-xs bg-linear-to-r from-[#c6d7fa] via-[#f3f6fd] to-[#c6d7fa] px-px text-[5px] leading-[7px] text-[#222]">
          <button aria-label="Previous frame" className="font-bold text-[#24449b]">&lt;</button>
          <span>64 / 100</span>
          <button aria-label="Next frame" className="font-bold text-[#24449b]">&gt;</button>
        </div>
      </div>
      <div className="flex h-3">
        <button aria-label="Open mini curve editor" className="flex w-[21px] items-center justify-center">
          <Icon className="h-2 w-[9px]">{g.bars}</Icon>
        </button>
        <div className="mr-6 flex flex-1 border-t border-[#c4c4c0] bg-[#d8d8d6] pr-1 pl-[5px]">
          <div className="relative flex flex-1">
            {Array.from({ length: 20 }, (_, i) => (
              <div key={i} className="flex flex-1 flex-col">
                <div className="flex h-[5px]">
                  {[0, 1, 2, 3, 4].map((t) => (
                    <span key={t} className="flex-1 border-l border-[#93938f]" />
                  ))}
                </div>
                <span className="flex w-0 justify-center text-[5px] leading-[6px] text-[#222]">{i * 5}</span>
              </div>
            ))}
            <div className="flex w-0 flex-col">
              <span className="h-[5px] border-l border-[#93938f]" />
              <span className="flex justify-center text-[5px] leading-[6px] text-[#222]">100</span>
            </div>
            <span className="absolute inset-y-0 left-[64%] w-[3px] border-x border-[#5e9dc4] bg-[#86bfe0]" />
          </div>
        </div>
      </div>
    </div>
  );
}

function Coord({ axis, value }: { axis: string; value: string }) {
  return (
    <label className="flex items-center gap-px">
      {axis}:
      <input defaultValue={value} className="h-[9px] w-[27px] border-t border-l border-[#555] bg-[#f2f0e6] text-[5px] leading-[7px] text-[#b9b6a9]" />
    </label>
  );
}

function StatusBar() {
  const btn = "rounded-xs border border-[#8a93bd] bg-[#f6f5ef] text-center text-[5px] leading-[7px] whitespace-nowrap";
  const rowsNav = [[g.zoom, g.zoomAll, g.extents, g.extentsAll], [g.fov, g.hand, g.walk, g.maxView]];
  return (
    <footer className="flex h-6 bg-[#f2f0e6] text-[5px] leading-[8px] text-[#222]">
      <div className="flex w-[47px] shrink-0 flex-col gap-px border-r border-[#d0cdc0] p-px">
        <div className="h-[10px] border border-[#c4b6b6] bg-[#ecd0d5]" />
        <div className="h-[11px] border-y border-[#c9c6ba] bg-white font-['Liberation_Mono',monospace] text-[6px] leading-[9px] font-bold whitespace-nowrap">Welcome to M</div>
      </div>
      <div className="flex min-w-0 flex-1 flex-col pl-[2px]">
        <div className="flex h-3 items-center justify-between border-t border-[#d5d2c6]">
          <span className="pl-1">None Selected</span>
          <div className="flex items-center gap-[5px] pr-[6px]">
            <Icon className="size-2">{g.lock}</Icon>
            <Icon className="size-[9px]">{g.axis}</Icon>
            <Coord axis="X" value="11892.502" />
            <Coord axis="Y" value="2711.75" />
            <Coord axis="Z" value="0.0" />
          </div>
        </div>
        <div className="flex h-3 items-center justify-between border-t border-[#d5d2c6] pr-px">
          <span className="pl-1">Click or click-and-drag to select objects</span>
          <Icon className="size-2">{g.cube}</Icon>
        </div>
      </div>
      <div className="flex w-[50px] shrink-0 flex-col border-l border-[#d5d2c6]">
        <span className="h-3 border-t border-[#d5d2c6] pl-1 leading-[12px]">Grid = 0.0</span>
        <span className="h-3 border-t border-[#d5d2c6] pl-1 leading-[12px]">Add Time Tag</span>
      </div>
      <div className="ml-[2px] flex shrink-0 items-center gap-[2px]">
        <button aria-label="Set keys" className={`flex h-[21px] w-[21px] items-center justify-center ${btn}`}>
          <Icon className="size-[14px]">{g.key}</Icon>
        </button>
        <div className="flex w-[23px] flex-col gap-px">
          <button className={`h-[10px] ${btn}`}>Auto Key</button>
          <button className={`h-[10px] ${btn}`}>Set Key</button>
        </div>
        <div className="flex w-[55px] flex-col gap-px">
          <Drop label="Key selection" value="Selected" className="h-[10px]" />
          <div className="flex items-center justify-between">
            <button aria-label="Tangent type"><Icon className="size-[9px]">{g.wave}</Icon></button>
            <button className={`h-[10px] w-[42px] ${btn}`}>Key Filters...</button>
          </div>
        </div>
      </div>
      <div className="ml-[3px] flex w-[58px] shrink-0 flex-col justify-around">
        <div className="flex items-center justify-between pr-1">
          {[g.toStart, g.prev, g.play, g.next, g.toEnd].map((ic, i) => (
            <button key={i} aria-label={["Go to start", "Previous", "Play", "Next", "Go to end"][i]}>
              <Icon className="size-2">{ic}</Icon>
            </button>
          ))}
        </div>
        <div className="flex items-center gap-[3px]">
          <button aria-label="Key mode"><Icon className="size-2">{g.keyMode}</Icon></button>
          <input aria-label="Current frame" defaultValue="64" className="h-2 w-[34px] border border-[#9db0cf] bg-white pl-px text-[5px] leading-[6px]" />
          <button aria-label="Time configuration" className="ml-auto"><Icon className="size-[9px]">{g.timeCfg}</Icon></button>
        </div>
      </div>
      <div className="flex w-[45px] shrink-0 flex-col justify-around pr-px pl-[2px]">
        {rowsNav.map((r, j) => (
          <div key={j} className="flex justify-between">
            {r.map((ic, i) => (
              <button key={i} aria-label={`Navigation ${j * 4 + i + 1}`}>
                <Icon className="size-[9px]">{ic}</Icon>
              </button>
            ))}
          </div>
        ))}
      </div>
    </footer>
  );
}

export default function App() {
  return (
    <div className="flex min-h-screen flex-col bg-black pt-[30px] pb-[34px] font-['DejaVu_Sans_Condensed','DejaVu_Sans',sans-serif]">
      <Header />
      <Toolbar />
      <Ribbon />
      <div className="flex flex-1 bg-[#f2f0e6]">
        <div className="flex min-w-0 flex-1 flex-col">
          <Viewport />
          <Timeline />
        </div>
        <CommandPanel />
      </div>
      <StatusBar />
    </div>
  );
}
